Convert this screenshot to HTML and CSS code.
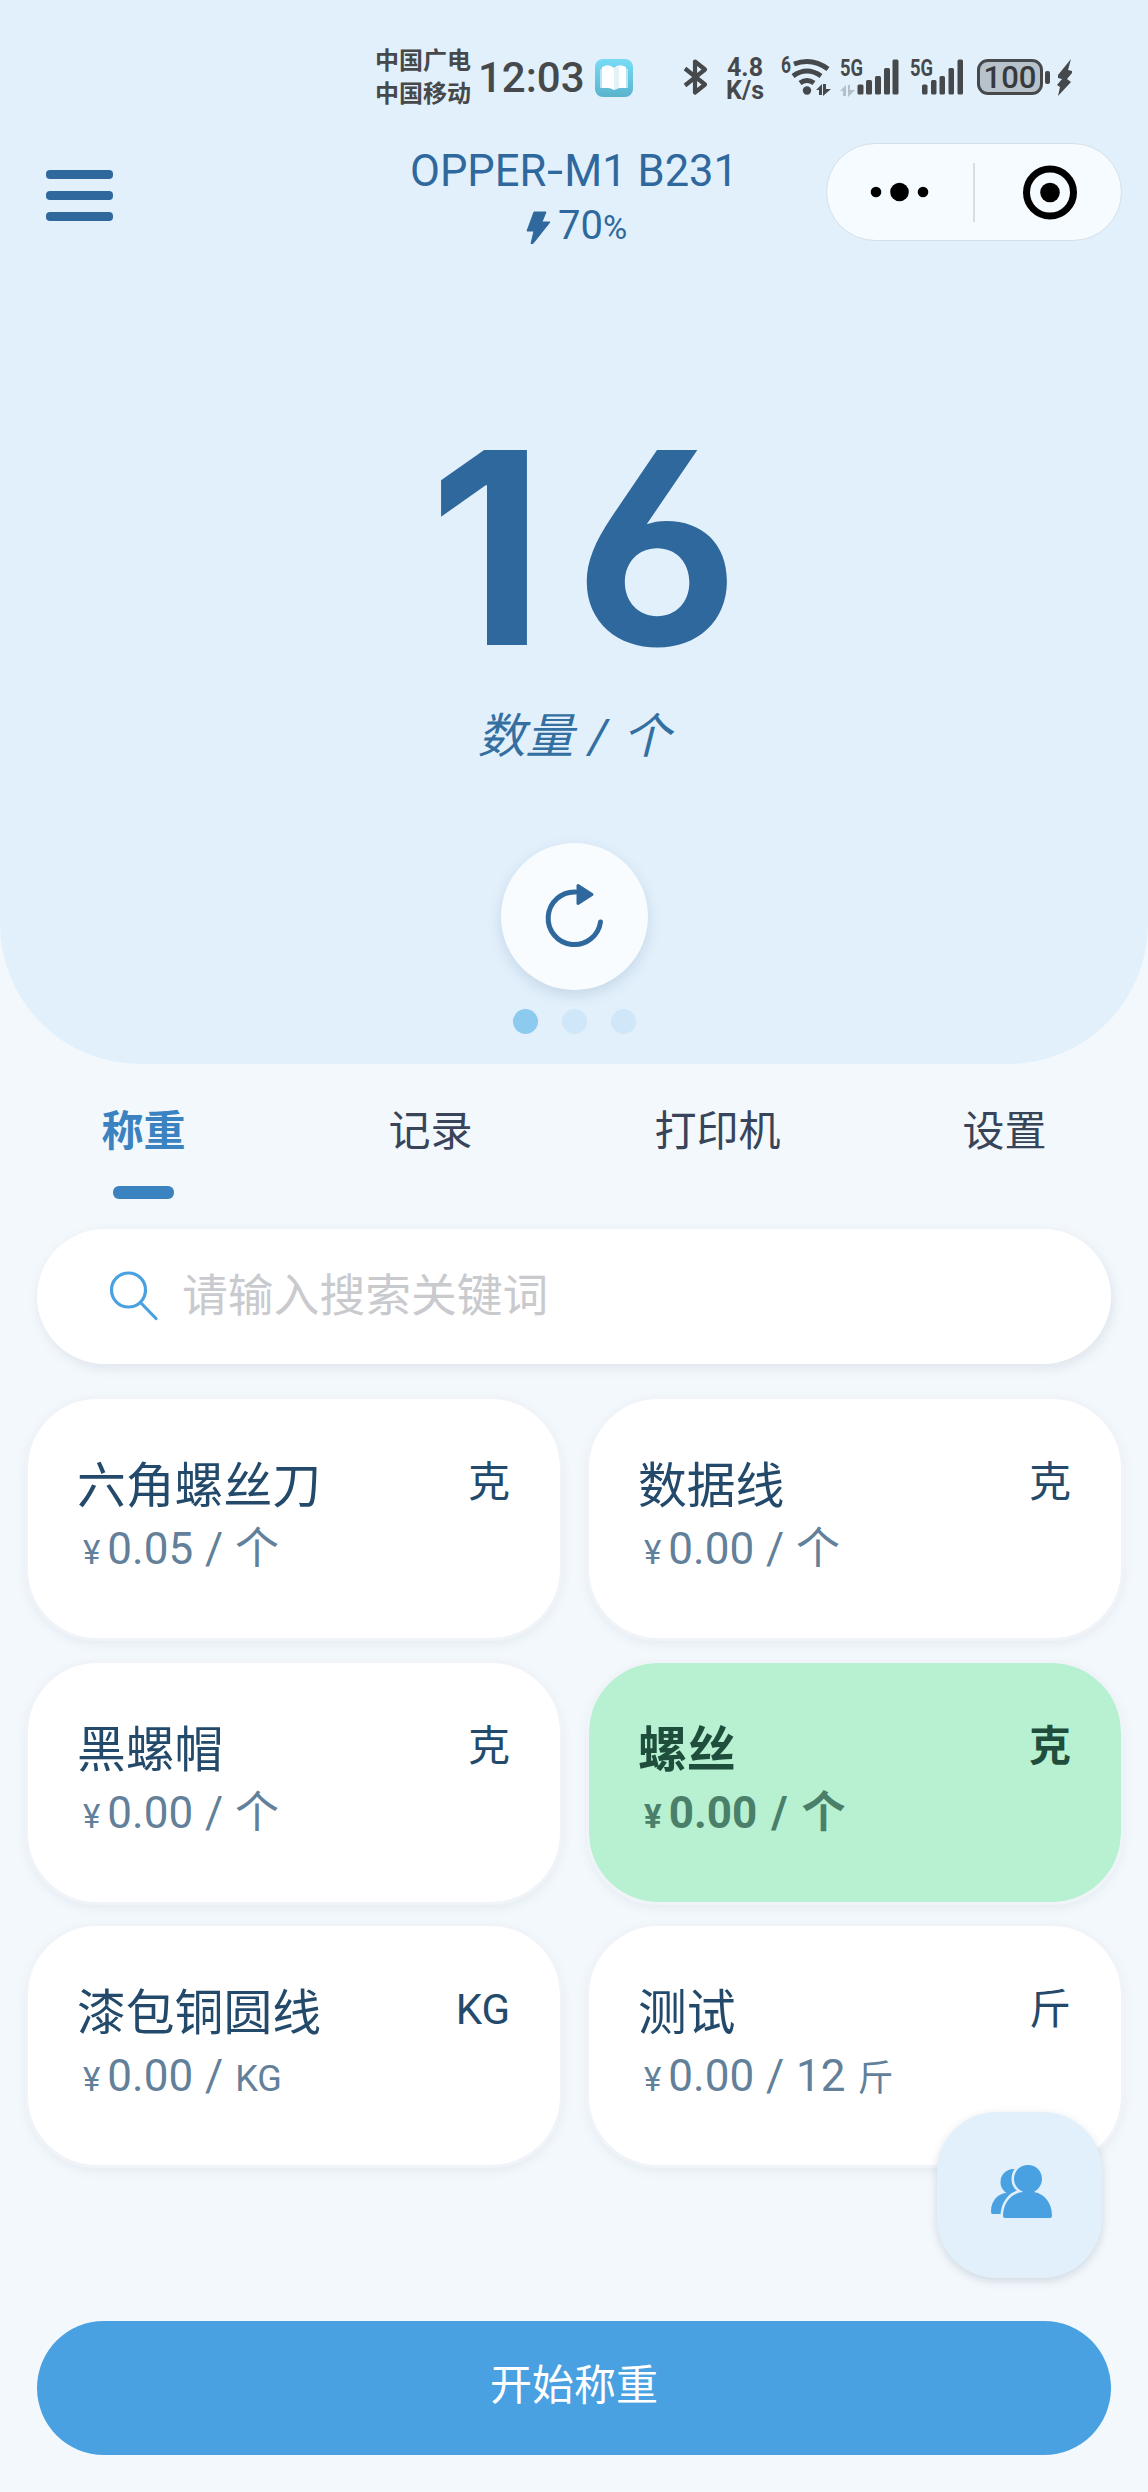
FILE: index.html
```html
<!DOCTYPE html>
<html lang="zh-CN">
<head>
<meta charset="utf-8">
<title>OPPER-M1 B231</title>
<link rel="stylesheet" href="styles.css">
</head>
<body>
<div class="app">
  <header class="hero">
    <div class="status">
      <div class="carriers"><span>中国广电</span><span>中国移动</span></div>
      <span class="clock">12:03</span>
      <svg class="book" width="38" height="38" viewBox="0 0 38 38">
        <defs><linearGradient id="bk" x1="0" y1="0" x2="0" y2="1"><stop offset="0" stop-color="#78dcf6"/><stop offset="1" stop-color="#5ab3cd"/></linearGradient></defs>
        <rect width="38" height="38" rx="8" fill="url(#bk)"/>
        <path d="M5 10h28v19H5z" fill="#b5e6f2"/>
        <path d="M7 8q7-4 12 1v22q-5-3-12-2zM31 8q-7-4-12 1v22q5-3 12-2z" fill="#fff"/>
        <path d="M19 9v22q2-2 5-2V8q-3-1-5 1z" fill="#e2f2f6"/>
      </svg>
      <svg class="bluetooth" width="24" height="36" viewBox="0 0 24 36" fill="none" stroke="#46494b" stroke-width="4.2" stroke-linejoin="round"><path d="M1 9.500L21 25.500L11 33.500V2.500L21 10.500L1 26.500"/></svg>
      <div class="speed"><span>4.8</span><span>K/s</span></div>
      <svg class="wifi" width="50" height="40" viewBox="0 0 50 40">
        <text x="0" y="15" class="mini" textLength="10" lengthAdjust="spacingAndGlyphs">6</text>
        <g fill="none" stroke="#46494b" stroke-width="5"><path d="M13 6q18-7 34 5"/><path d="M12 18q14-10 28 0"/><path d="M19 25q7-5 14 0"/></g>
        <circle cx="26" cy="32.500" r="4.200" fill="#46494b"/>
        <path d="M35 32l6-6v11h-3v-5zM42 26h3v5h5l-8 7z" fill="#46494b"/>
      </svg>
      <svg class="signal" width="60" height="40" viewBox="0 0 60 40">
        <text x="0" y="17" class="mini" textLength="23" lengthAdjust="spacingAndGlyphs">5G</text>
        <path d="M0 32l6-6v11H3v-5zM8 26h2v5h5l-7 7z" fill="#b3bfc9"/>
        <g fill="#46494b"><rect x="17.500" y="25.500" width="6" height="10" rx="1.500"/><rect x="26" y="21" width="6" height="14.500" rx="1.500"/><rect x="35" y="17" width="6" height="18.500" rx="1.500"/><rect x="44" y="9" width="6" height="26.500" rx="1.500"/><rect x="52.500" y="0.500" width="6" height="35" rx="1.500"/></g>
      </svg>
      <svg class="signal second" width="54" height="40" viewBox="0 0 54 40">
        <text x="0" y="17" class="mini" textLength="23" lengthAdjust="spacingAndGlyphs">5G</text>
        <g fill="#46494b"><rect x="12" y="25.500" width="5.500" height="10" rx="1.500"/><rect x="21" y="21" width="5.500" height="14.500" rx="1.500"/><rect x="29.500" y="17" width="5.500" height="18.500" rx="1.500"/><rect x="38.500" y="9" width="5.500" height="26.500" rx="1.500"/><rect x="47.500" y="0.500" width="5.500" height="35" rx="1.500"/></g>
      </svg>
      <div class="battery">100</div>
      <i class="nub"></i>
      <svg class="charge" width="15" height="37" viewBox="0 0 15 37"><path d="M14 0L1 16v3l4 1-5 6 3 2-2 9L14 23l-4-3 5-6v-2l-4-1z" fill="#46494b"/></svg>
    </div>

    <div class="navbar">
      <div class="menu"><i></i><i></i><i></i></div>
      <div class="device">
        <div class="device-name">OPPER<span class="dash">-</span>M1 B231</div>
        <div class="device-power">
          <svg width="23" height="33" viewBox="0 0 23 33"><path d="M7 1h12l-4 10h8L6 32.500H4L7 20H0z" fill="#2f689d" stroke="#2f689d" stroke-linejoin="round"/></svg>
          <span class="level">70<small>%</small></span>
        </div>
      </div>
      <div class="capsule">
        <svg width="294" height="96" viewBox="0 0 294 96">
          <circle cx="49" cy="48" r="5.300"/><circle cx="72.500" cy="48" r="9.300"/><circle cx="96" cy="48" r="5.300"/>
          <path d="M147 19v59" stroke="#d8dde1" stroke-width="2"/>
          <circle cx="223" cy="48.500" r="23.500" fill="none" stroke="#000" stroke-width="7"/><circle cx="223" cy="48.500" r="9.800"/>
        </svg>
      </div>
    </div>

    <div class="reading">16</div>
    <div class="reading-label">数量 / 个</div>
    <div class="refresh">
      <svg width="64" height="72" viewBox="0 0 64 72"><path d="M33.500 11A26.300 26.300 0 1 0 58.500 41" fill="none" stroke="#2f689d" stroke-width="5" stroke-linecap="round"/><path d="M36 4.500l14 9-14 9z" fill="#2f689d" stroke="#2f689d" stroke-width="3" stroke-linejoin="round"/></svg>
    </div>
    <div class="dots"><i class="on"></i><i></i><i></i></div>
  </header>

  <nav class="tabs">
    <div class="tab active">称重</div>
    <div class="tab">记录</div>
    <div class="tab">打印机</div>
    <div class="tab">设置</div>
  </nav>

  <div class="search">
    <svg width="50" height="54" viewBox="0 0 50 54" fill="none" stroke="#4aa1e1" stroke-width="3.200" stroke-linecap="round"><ellipse cx="19.500" cy="20" rx="17" ry="17"/><path d="M32 33l15 15.500"/></svg>
    <span>请输入搜索关键词</span>
  </div>

  <main class="grid">
    <section class="card"><div class="row"><span class="name">六角螺丝刀</span><span class="unit">克</span></div><div class="price"><small>¥</small>0.05 / 个</div></section>
    <section class="card"><div class="row"><span class="name">数据线</span><span class="unit">克</span></div><div class="price"><small>¥</small>0.00 / 个</div></section>
    <section class="card"><div class="row"><span class="name">黑螺帽</span><span class="unit">克</span></div><div class="price"><small>¥</small>0.00 / 个</div></section>
    <section class="card selected"><div class="row"><span class="name">螺丝</span><span class="unit">克</span></div><div class="price"><small>¥</small>0.00 / 个</div></section>
    <section class="card"><div class="row"><span class="name">漆包铜圆线</span><span class="unit">KG</span></div><div class="price"><small>¥</small>0.00 / <em>KG</em></div></section>
    <section class="card"><div class="row"><span class="name">测试</span><span class="unit">斤</span></div><div class="price"><small>¥</small>0.00 / 12 <em>斤</em></div></section>
  </main>

  <button class="start">开始称重</button>

  <div class="fab">
    <svg width="62" height="54" viewBox="0 0 62 54">
      <g fill="#4aa1e1"><circle cx="22.500" cy="17" r="13"/><path d="M0 46C0 36 7 28 16 28h16v21H1q-1 0-1-3z"/></g>
      <g fill="#4aa1e1" stroke="#e2f0fb" stroke-width="5" paint-order="stroke"><path d="M12 51c0-13 8-23 20-24-6-3-9-8-9-13 0-8 6-14 14-14s14 6 14 14c0 5-3 10-8 13 11 2 18 11 18 24q0 2-2 2H14q-2 0-2-2z"/></g>
    </svg>
  </div>
</div>
</body>
</html>
```
FILE: styles.css
```css
* { box-sizing: border-box; }
body { margin: 0; background: #f3f8fc; font-family: Roboto, "Noto Sans CJK SC", sans-serif; }
.app { position: relative; width: 1148px; height: 2492px; overflow: hidden; display: flex; flex-direction: column; }
svg { display: block; overflow: visible; flex: none; }
i { display: block; }

.hero { height: 1064px; flex: none; background: #e2f0fb; border-radius: 0 0 140px 140px; display: flex; flex-direction: column; align-items: center; color: #2f689d; }

.status { width: 100%; height: 115px; padding: 44px 0 0 375px; display: flex; align-items: flex-start; color: #46494b; flex: none; }
.carriers { width: 97px; padding-top: 1px; display: flex; flex-direction: column; font-size: 24px; line-height: 33px; font-weight: 700; white-space: nowrap; }
.clock { width: 108px; margin-left: 6px; padding-top: 9px; font-size: 42px; line-height: 50px; font-weight: 500; white-space: nowrap; }
.book { margin: 15px 0 0 9px; }
.bluetooth { margin: 15px 0 0 51px; }
.speed { width: 42px; margin: 12px 0 0 16px; display: flex; flex-direction: column; align-items: center; font-size: 25px; line-height: 23px; font-weight: 700; }
.wifi { margin: 14px 0 0 15px; }
.mini { font-size: 23px; font-weight: 700; fill: #46494b; }
.signal { margin: 15px 0 0 9px; }
.second { margin-left: 10px; }
.battery { width: 66px; height: 36px; margin: 15px 0 0 13px; border: 3px solid #46494b; border-radius: 11px; background: #b7c2cb; color: #363a3d; font-size: 31px; line-height: 31px; font-weight: 500; text-align: center; }
.nub { width: 5px; height: 13px; margin: 27px 0 0 2px; border-radius: 2px; background: #46494b; }
.charge { margin: 15px 0 0 7px; }

.navbar { width: 100%; height: 150px; flex: none; display: grid; grid-template-columns: 322px 500px 326px; align-items: start; }
.menu { padding: 55px 0 0 46px; display: flex; flex-direction: column; gap: 12.500px; }
.menu i { width: 67px; height: 8.500px; border-radius: 4px; background: #2f689d; }
.device { padding-top: 31px; display: flex; flex-direction: column; align-items: center; }
.device-name { padding-left: 4px; font-size: 43.500px; line-height: 52px; white-space: nowrap; }
.dash { display: inline-block; transform: scaleX(1.35); padding: 0 3px; }
.device-power { display: flex; align-items: center; gap: 8px; margin: 4px 0 0 10px; }
.level { font-size: 40px; line-height: 48px; white-space: nowrap; }
.level small { font-size: 33px; }
.capsule { width: 296px; height: 98px; margin: 28px 0 0 4px; border: 1px solid #d5dfe7; border-radius: 49px; background: #f6fbff; }

.reading { height: 324px; margin: 121px 0 0; padding-left: 50px; font-family: Inter, sans-serif; font-weight: 700; font-size: 268px; line-height: 324px; letter-spacing: 30px; font-feature-settings: "cv03", "ss01"; }
.reading-label { height: 60px; margin-top: -3px; font-size: 48px; line-height: 60px; font-style: italic; word-spacing: 3px; color: #346fa1; white-space: nowrap; }
.refresh { width: 147px; height: 147px; margin-top: 76px; border-radius: 50%; background: #f8fcff; box-shadow: 0 5px 14px rgba(50, 90, 130, .16); display: flex; align-items: center; justify-content: center; }
.dots { display: flex; gap: 24px; margin-top: 19px; }
.dots i { width: 25px; height: 25px; border-radius: 50%; background: #cfe7f9; }
.dots .on { background: #8ccaef; }

.tabs { height: 165px; flex: none; display: grid; grid-template-columns: repeat(4, 1fr); }
.tab { padding-top: 38px; display: flex; flex-direction: column; align-items: center; font-size: 42px; line-height: 60px; color: #384459; }
.active { font-weight: 700; color: #3a82c0; }
.active::after { content: ""; width: 61px; height: 13px; margin-top: 24px; border-radius: 6px; background: #3a82c0; }

.search { height: 135px; flex: none; margin: 0 37px; padding: 0 0 0 72px; border-radius: 68px; background: #fff; box-shadow: 2px 4px 12px rgba(80, 100, 120, .13); display: flex; align-items: center; gap: 23px; color: #c9cace; font-size: 45.800px; line-height: 60px; }

.grid { margin: 32px 24px 0 25px; display: grid; grid-template-columns: 1fr 1fr; gap: 18.500px 23px; }
.card { height: 245px; padding: 58px 50px 0 49px; border: 3px solid #f0f4f9; border-radius: 72px; background: #fff; background-clip: padding-box; box-shadow: 0 4px 10px rgba(80, 110, 140, .08); color: #244a6b; }
.row { display: flex; justify-content: space-between; align-items: flex-start; }
.name { font-size: 48.800px; line-height: 60px; }
.unit { margin-top: -1px; font-size: 42px; line-height: 54px; }
.price { padding-left: 6px; font-size: 44px; line-height: 64px; word-spacing: 1px; color: #62809a; white-space: nowrap; }
.price small { font-size: 33px; margin-right: 7px; }
.price em { font-style: normal; font-size: 36px; }
.selected { background-color: #b8f1d2; color: #1f4e3d; font-weight: 700; }
.selected .price { color: #4a7f6a; word-spacing: 3px; }

.start { height: 134px; flex: none; margin: 153px 37px 0; padding: 0 0 4px; border: 0; border-radius: 67px; background: #4aa1e1; color: #fff; font: 42px/60px Roboto, "Noto Sans CJK SC", sans-serif; }

.fab { position: absolute; left: 937px; top: 2112px; width: 165px; height: 166px; border-radius: 60px; background: #e2f0fb; box-shadow: 0 3px 10px rgba(40, 70, 100, .18); padding: 53px 0 0 54px; }
```
